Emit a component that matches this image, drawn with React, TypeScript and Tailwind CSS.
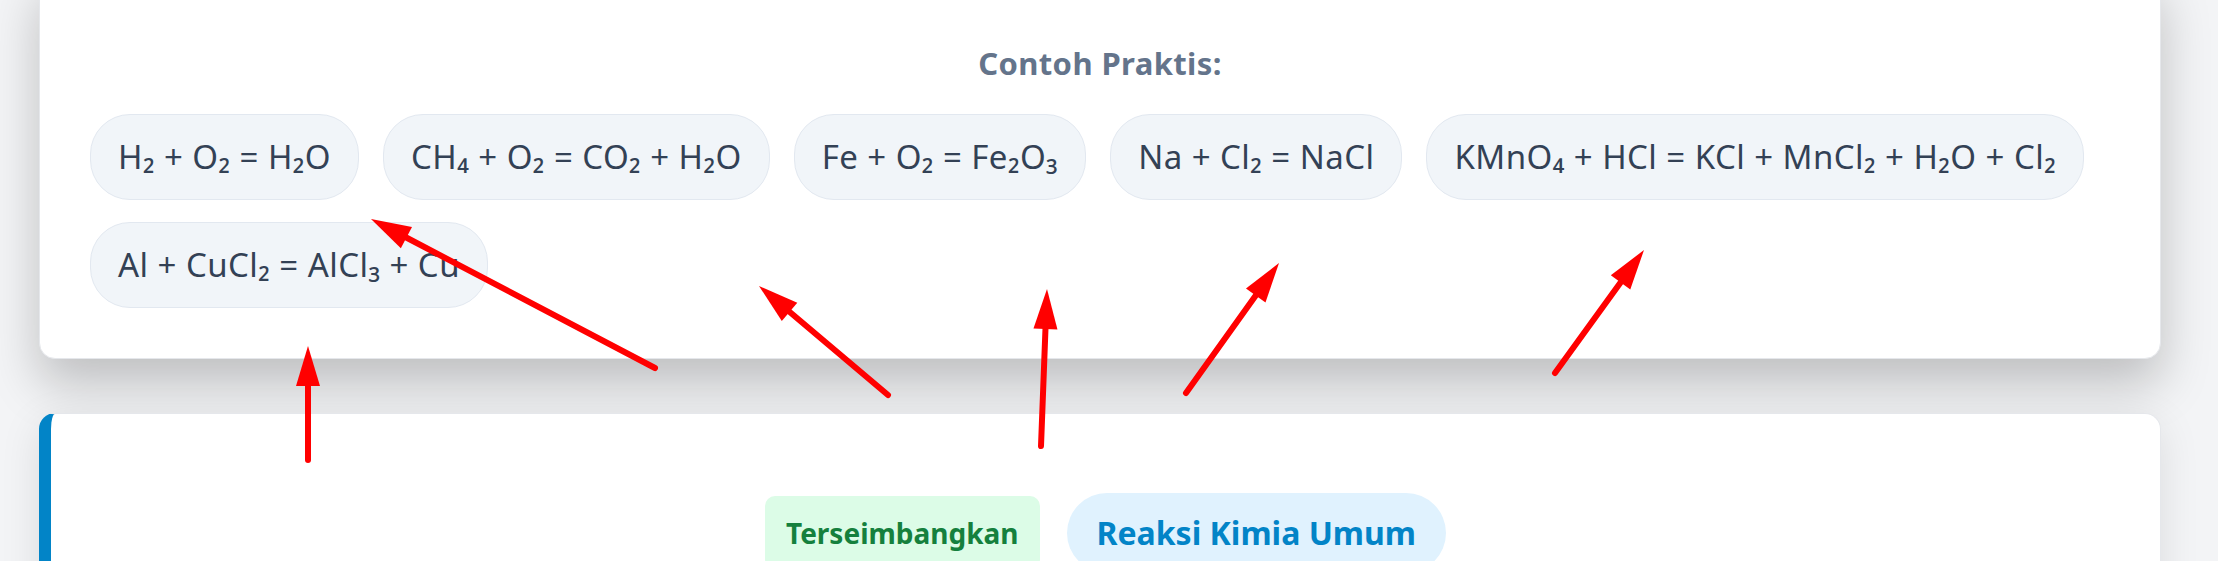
import React from 'react';

type Arrow = { from: [number, number]; to: [number, number] };

const EXAMPLES = [
  'H₂ + O₂ = H₂O',
  'CH₄ + O₂ = CO₂ + H₂O',
  'Fe + O₂ = Fe₂O₃',
  'Na + Cl₂ = NaCl',
  'KMnO₄ + HCl = KCl + MnCl₂ + H₂O + Cl₂',
  'Al + CuCl₂ = AlCl₃ + Cu',
];

// red markers drawn on top of the page
const ARROWS: Arrow[] = [
  { from: [308, 460], to: [308, 346] },
  { from: [655, 368], to: [371, 219] },
  { from: [888, 395], to: [759, 286] },
  { from: [1041, 446], to: [1047, 289] },
  { from: [1186, 393], to: [1279, 263] },
  { from: [1555, 373], to: [1644, 250] },
];

const ArrowMark: React.FC<Arrow> = ({ from, to }) => {
  const [x1, y1] = from;
  const [x2, y2] = to;
  const len = Math.hypot(x2 - x1, y2 - y1);
  const dx = (x2 - x1) / len;
  const dy = (y2 - y1) / len;
  const headLen = 40;
  const headHalf = 12;
  const bx = x2 - dx * headLen;
  const by = y2 - dy * headLen;
  const nx = -dy;
  const ny = dx;
  const points = `${x2},${y2} ${bx + nx * headHalf},${by + ny * headHalf} ${bx - nx * headHalf},${by - ny * headHalf}`;

  return (
    <g>
      <line x1={x1} y1={y1} x2={bx + dx * 4} y2={by + dy * 4} stroke="#ff0000" strokeWidth={6} strokeLinecap="round" />
      <polygon points={points} fill="#ff0000" />
    </g>
  );
};

const App: React.FC = () => {
  return (
    <div className="relative min-h-screen overflow-hidden bg-[#f3f4f6] font-['Noto_Sans','Open_Sans',sans-serif]">
      <div className="-mt-[30px] flex flex-col gap-[54px] pl-[39px] pr-[57px]">
        {/* Practice examples */}
        <section className="rounded-[16px] border border-[#e5e7eb] bg-white px-[50px] pt-[70px] pb-[50px] shadow-[0_25px_50px_rgba(0,0,0,0.22)]">
          <h3 className="text-center text-[31px] leading-[45px] font-bold tracking-[0.4px] text-[#64748b]">Contoh Praktis:</h3>
          <div className="mt-[28px] flex flex-wrap gap-x-[24px] gap-y-[22px]">
            {EXAMPLES.map((eq) => (
              <button
                key={eq}
                className="rounded-[40px] border border-[#e2e8f0] bg-[#f1f5f9] px-[27px] py-[19px] text-[33px] leading-[46px] tracking-[0.45px] text-[#334155]"
              >
                {eq}
              </button>
            ))}
          </div>
        </section>

        {/* Result card */}
        <section className="h-[400px] rounded-[16px] border border-l-[12px] border-[#e5e7eb] border-l-[#0284c7] bg-white pt-[79px] shadow-[0_10px_40px_rgba(0,0,0,0.1)]">
          <div className="flex items-center justify-center gap-[27px]">
            <span className="rounded-[10px] bg-[#dcfce7] px-[21px] py-[16px] text-[28px] leading-[42px] font-bold text-[#15803d]">
              Terseimbangkan
            </span>
            <span className="rounded-full bg-[#e0f2fe] px-[30px] py-[15px] text-[32px] leading-[50px] font-bold text-[#0284c7]">
              Reaksi Kimia Umum
            </span>
          </div>
        </section>
      </div>

      <svg className="pointer-events-none absolute inset-0 h-full w-full" viewBox="0 0 2218 561" preserveAspectRatio="xMinYMin meet">
        {ARROWS.map((a, i) => (
          <ArrowMark key={i} {...a} />
        ))}
      </svg>
    </div>
  );
};

export default App;
